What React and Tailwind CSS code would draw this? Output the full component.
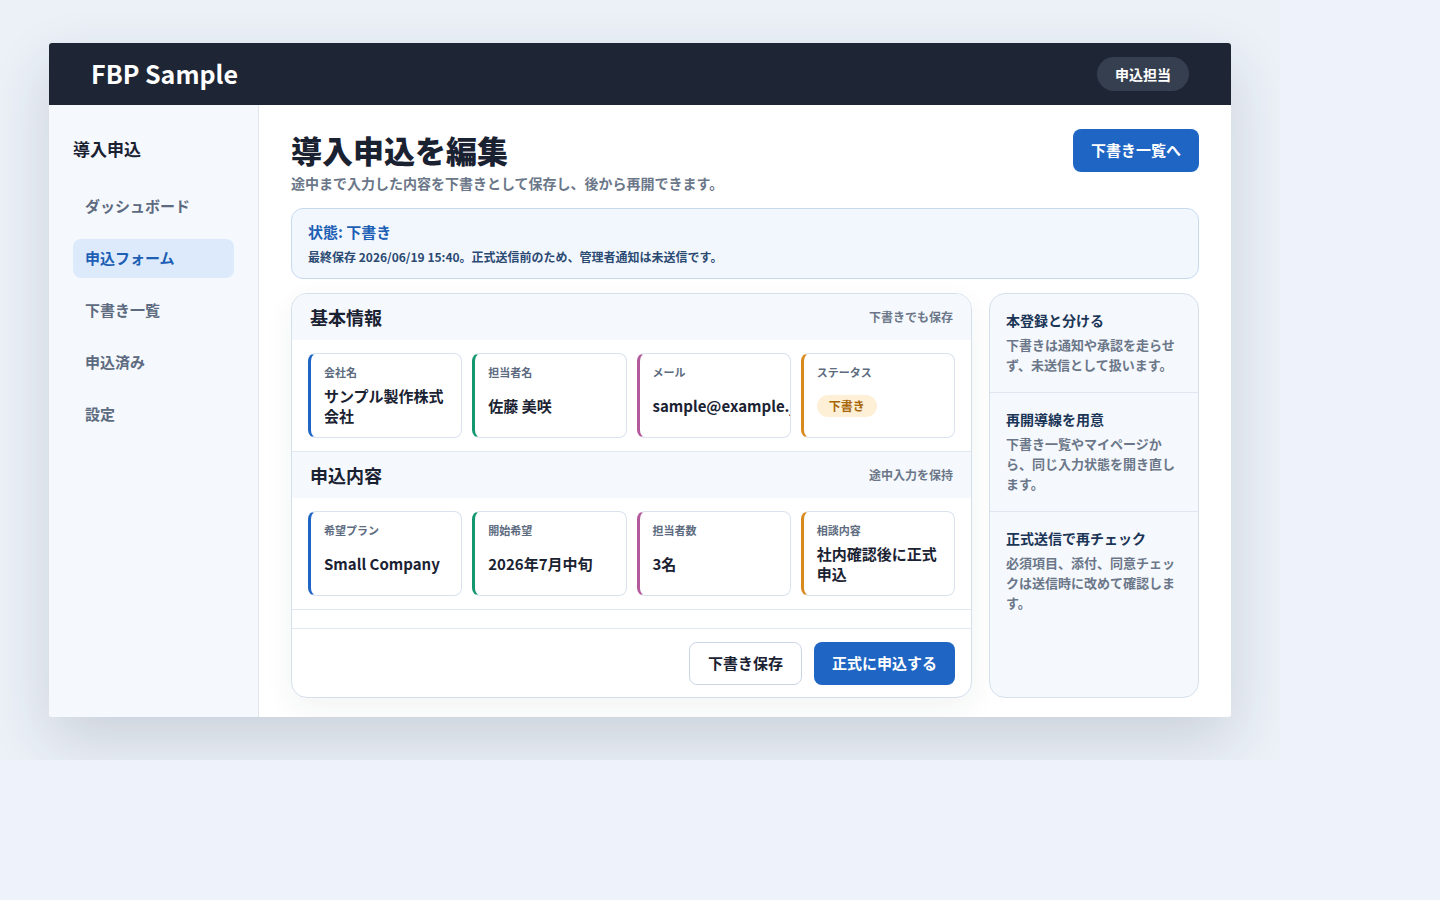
const font = { fontFamily: '"Noto Sans CJK JP", "Noto Sans", sans-serif' };

const NAV = ['ダッシュボード', '申込フォーム', '下書き一覧', '申込済み', '設定'];

const BASIC = [
  { label: '会社名', value: 'サンプル製作株式会社', color: 'border-l-[#1f66c4]' },
  { label: '担当者名', value: '佐藤 美咲', color: 'border-l-[#14976e]' },
  { label: 'メール', value: 'sample@example.jp', color: 'border-l-[#b45a9c]' },
  { label: 'ステータス', badge: '下書き', color: 'border-l-[#d98a1e]' },
];

const APPLY = [
  { label: '希望プラン', value: 'Small Company', color: 'border-l-[#1f66c4]' },
  { label: '開始希望', value: '2026年7月中旬', color: 'border-l-[#14976e]' },
  { label: '担当者数', value: '3名', color: 'border-l-[#b45a9c]' },
  { label: '相談内容', value: '社内確認後に正式申込', color: 'border-l-[#d98a1e]' },
];

const NOTES = [
  { title: '本登録と分ける', body: '下書きは通知や承認を走らせず、未送信として扱います。' },
  { title: '再開導線を用意', body: '下書き一覧やマイページから、同じ入力状態を開き直します。' },
  { title: '正式送信で再チェック', body: '必須項目、添付、同意チェックは送信時に改めて確認します。' },
];

function FieldCard({ f }) {
  return (
    <div className={`h-[85px] rounded-lg border border-[#d9e2ee] border-l-[3px] ${f.color} bg-white pl-[13px] pr-3 pt-[10px] overflow-hidden`}>
      <p className="text-[11px] font-bold text-[#5d6b80] leading-4">{f.label}</p>
      <div className="h-[52px] flex items-center">
        {f.badge ? (
          <span className="px-3 py-[3px] rounded-full bg-[#fdf0d6] text-[#a8660a] text-xs font-bold">{f.badge}</span>
        ) : (
          <p className="text-[15px] font-bold text-[#1a2232] leading-5">{f.value}</p>
        )}
      </div>
    </div>
  );
}

function Section({ title, note, fields }) {
  return (
    <div>
      <div className="h-[46px] bg-[#f5f8fd] px-[18px] flex items-center justify-between">
        <h2 className="text-lg font-bold text-[#1a2232]">{title}</h2>
        <span className="text-xs font-bold text-[#6b7789]">{note}</span>
      </div>
      <div className="grid grid-cols-4 gap-[10px] px-4 py-[13px] border-b border-[#e1e8f1]">
        {fields.map(f => <FieldCard key={f.label} f={f} />)}
      </div>
    </div>
  );
}

export default function App() {
  return (
    <div style={font} className="min-h-[900px] bg-[#eef3fb]">
      <div className="w-[1280px] h-[760px] bg-[#ecf1f8] pl-[49px] pt-[43px] overflow-hidden">
        <div className="w-[1182px] h-[674px] bg-white rounded-[3px] shadow-[0_24px_60px_rgba(30,45,70,0.16)] overflow-hidden flex flex-col">
          <header className="h-[62px] bg-[#1e2636] flex items-center justify-between pl-[42px] pr-[42px]">
            <span className="text-white text-[25px] font-bold">FBP Sample</span>
            <span className="px-[18px] py-[7px] rounded-full bg-[#363f4f] text-white text-sm font-bold">申込担当</span>
          </header>
          <div className="flex flex-1">
            <aside className="w-[210px] bg-[#f5f8fd] border-r border-[#dfe6ef] px-6 pt-[31px]">
              <h3 className="text-[17px] font-bold text-[#1a2232] mb-[25px]">導入申込</h3>
              <nav className="flex flex-col gap-[13px]">
                {NAV.map((n, i) => (
                  <div key={n} className={`h-[39px] px-3 rounded-lg flex items-center text-[15px] font-bold ${i === 1 ? 'bg-[#dceafc] text-[#1d5fb4]' : 'text-[#5d6b80]'}`}>{n}</div>
                ))}
              </nav>
            </aside>
            <main className="flex-1 px-8 pt-6">
              <div className="flex items-start justify-between">
                <div>
                  <h1 className="text-[31px] font-black text-[#1a2232] leading-[42px]">導入申込を編集</h1>
                  <p className="text-[14px] font-bold text-[#6b7789] mt-[2px]">途中まで入力した内容を下書きとして保存し、後から再開できます。</p>
                </div>
                <button className="h-[43px] px-[18px] rounded-lg bg-[#1f66c4] text-white text-[15px] font-bold">下書き一覧へ</button>
              </div>
              <div className="mt-[14px] h-[71px] rounded-xl border border-[#c6d9ef] bg-[#f2f7fe] px-4 pt-[13px]">
                <p className="text-[15px] font-bold text-[#1d5fb4] leading-5">状態: 下書き</p>
                <p className="text-[12px] font-bold text-[#2b4a72] mt-[6px]">最終保存 2026/06/19 15:40。正式送信前のため、管理者通知は未送信です。</p>
              </div>
              <div className="mt-[14px] flex gap-[17px]">
                <div className="w-[681px] h-[405px] rounded-2xl border border-[#d5e0ec] bg-white shadow-[0_10px_30px_rgba(30,45,70,0.06)] overflow-hidden flex flex-col">
                  <Section title="基本情報" note="下書きでも保存" fields={BASIC} />
                  <Section title="申込内容" note="途中入力を保持" fields={APPLY} />
                  <div className="mt-[18px] border-t border-[#e1e8f1] flex-1 flex items-center justify-end gap-3 px-4">
                    <button className="h-[43px] px-[18px] rounded-lg border border-[#c9d6e6] bg-white text-[#1a2232] text-[15px] font-bold">下書き保存</button>
                    <button className="h-[43px] px-[18px] rounded-lg bg-[#1f66c4] text-white text-[15px] font-bold">正式に申込する</button>
                  </div>
                </div>
                <aside className="w-[210px] h-[405px] rounded-2xl border border-[#d5e0ec] bg-[#f5f8fd] overflow-hidden">
                  {NOTES.map((n, i) => (
                    <div key={n.title} className={`px-4 pt-[16px] pb-[17px] ${i < 2 ? 'border-b border-[#dfe6ef]' : ''}`}>
                      <p className="text-sm font-bold text-[#1b3556]">{n.title}</p>
                      <p className="text-[13px] font-bold text-[#6b7789] leading-5 mt-[5px]">{n.body}</p>
                    </div>
                  ))}
                </aside>
              </div>
            </main>
          </div>
        </div>
      </div>
    </div>
  );
}
